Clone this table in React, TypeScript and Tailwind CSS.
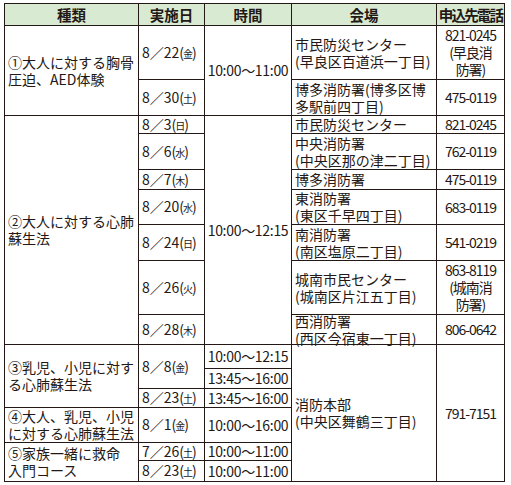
type Cell = {
  text: string;
  rs?: number;
  kind?: "date" | "time" | "tel";
};

const font = "font-['Noto_Sans_CJK_JP','Noto_Sans_CJK_SC',sans-serif]";

// セルは表の順に並べる（グリッドの自動配置で rowspan を再現）
const cells: Cell[] = [
  { text: "①大人に対する胸骨\n圧迫、AED体験", rs: 2 },
  { text: "8／22|金", kind: "date" },
  { text: "10:00〜11:00", rs: 2, kind: "time" },
  { text: "市民防災センター\n(早良区百道浜一丁目)" },
  { text: "821-0245\n(早良消\n防署)", kind: "tel" },

  { text: "8／30|土", kind: "date" },
  { text: "博多消防署(博多区博\n多駅前四丁目)" },
  { text: "475-0119", kind: "tel" },

  { text: "②大人に対する心肺\n蘇生法", rs: 7 },
  { text: "8／3|日", kind: "date" },
  { text: "10:00〜12:15", rs: 7, kind: "time" },
  { text: "市民防災センター" },
  { text: "821-0245", kind: "tel" },

  { text: "8／6|水", kind: "date" },
  { text: "中央消防署\n(中央区那の津二丁目)" },
  { text: "762-0119", kind: "tel" },

  { text: "8／7|木", kind: "date" },
  { text: "博多消防署" },
  { text: "475-0119", kind: "tel" },

  { text: "8／20|水", kind: "date" },
  { text: "東消防署\n(東区千早四丁目)" },
  { text: "683-0119", kind: "tel" },

  { text: "8／24|日", kind: "date" },
  { text: "南消防署\n(南区塩原二丁目)" },
  { text: "541-0219", kind: "tel" },

  { text: "8／26|火", kind: "date" },
  { text: "城南市民センター\n(城南区片江五丁目)" },
  { text: "863-8119\n(城南消\n防署)", kind: "tel" },

  { text: "8／28|木", kind: "date" },
  { text: "西消防署\n(西区今宿東一丁目)" },
  { text: "806-0642", kind: "tel" },

  { text: "③乳児、小児に対す\nる心肺蘇生法", rs: 3 },
  { text: "8／8|金", rs: 2, kind: "date" },
  { text: "10:00〜12:15", kind: "time" },
  { text: "消防本部\n(中央区舞鶴三丁目)", rs: 6 },
  { text: "791-7151", rs: 6, kind: "tel" },

  { text: "13:45〜16:00", kind: "time" },

  { text: "8／23|土", kind: "date" },
  { text: "13:45〜16:00", kind: "time" },

  { text: "④大人、乳児、小児\nに対する心肺蘇生法" },
  { text: "8／1|金", kind: "date" },
  { text: "10:00〜16:00", kind: "time" },

  { text: "⑤家族一緒に救命\n入門コース", rs: 2 },
  { text: "7／26|土", kind: "date" },
  { text: "10:00〜11:00", kind: "time" },

  { text: "8／23|土", kind: "date" },
  { text: "10:00〜11:00", kind: "time" },
];

const spanClass: Record<number, string> = {
  1: "",
  2: "row-span-2",
  3: "row-span-3",
  6: "row-span-6",
  7: "row-span-7",
};

const headers = ["種類", "実施日", "時間", "会場", "申込先電話"];

function DateText({ text }: { text: string }) {
  const [d, w] = text.split("|");
  return (
    <span>
      {d}
      <span className="tracking-[-1px]">
        (<span className="text-[10px]">{w}</span>)
      </span>
    </span>
  );
}

export default function App() {
  return (
    <div className={`h-[485px] w-[511px] bg-white pl-[4px] pt-[3px] text-[#231815] ${font}`}>
      <div className="grid w-[501px] grid-cols-[134px_66px_87px_145px_68px] grid-rows-[22px_54px_36px_18px_36px_20px_35px_36px_54px_30px_24px_20px_19px_35px_18px_21px] border-l border-t border-[#231815] text-[14px] leading-[17px]">
        {headers.map((h, i) => (
          <div
            key={h}
            className={`flex items-center justify-center border-b border-r border-[#231815] bg-[#d9ead3] text-[14.5px] font-bold ${
              i === 4 ? "tracking-[-1.8px]" : ""
            }`}
          >
            {h}
          </div>
        ))}
        {cells.map((c, i) => (
          <div
            key={i}
            className={`flex items-center whitespace-pre-line border-b border-r border-[#231815] ${
              spanClass[c.rs ?? 1]
            } ${
              c.kind === "tel"
                ? "justify-center text-center tracking-[-1px]"
                : c.kind === "time"
                  ? "justify-center tracking-[-0.3px]"
                  : "pl-[3px]"
            }`}
          >
            {c.kind === "date" ? <DateText text={c.text} /> : c.text}
          </div>
        ))}
      </div>
    </div>
  );
}
